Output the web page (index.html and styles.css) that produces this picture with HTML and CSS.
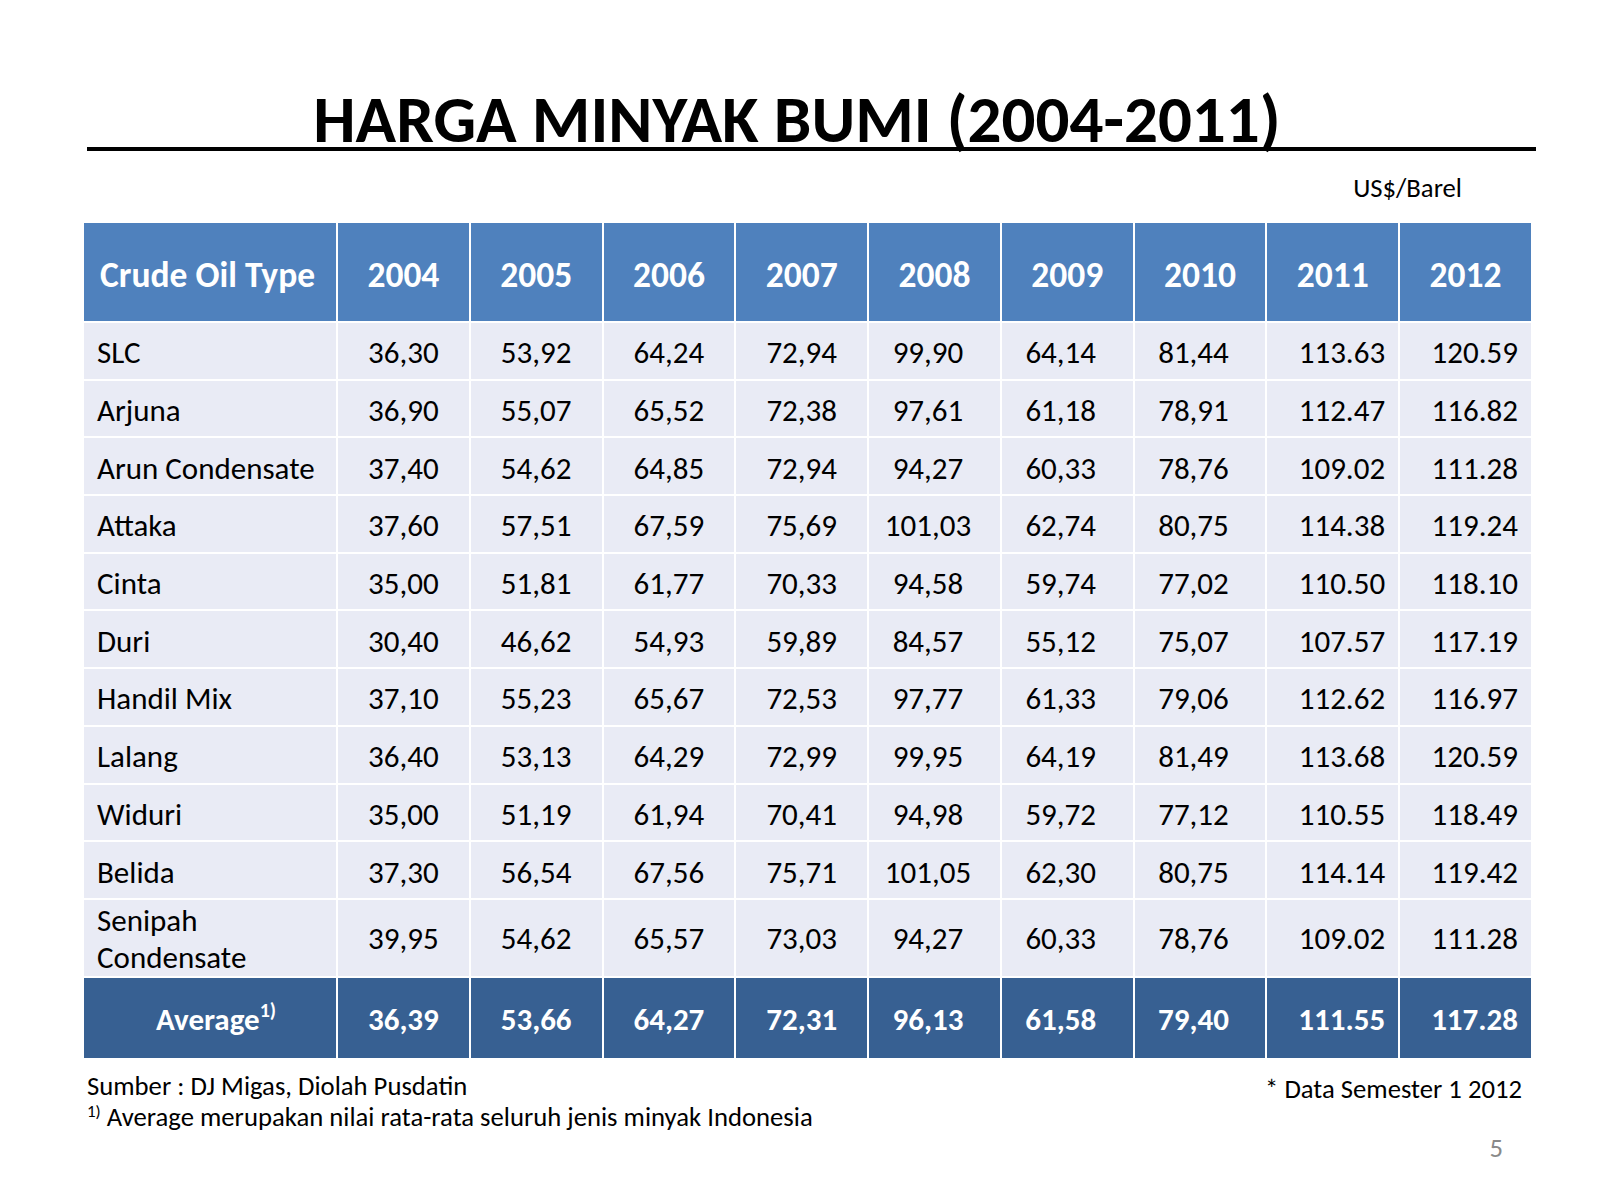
FILE: index.html
```html
<!DOCTYPE html>
<html lang="id">
<head>
<meta charset="utf-8">
<title>Harga Minyak Bumi (2004-2011)</title>
<link rel="stylesheet" href="styles.css">
</head>
<body>
<div class="slide">
  <div class="title-wrap"><h1 class="title">HARGA MINYAK BUMI (2004-2011)</h1></div>
  <div class="unit">US$/Barel</div>
  <table class="prices">
    <colgroup>
      <col class="c-name"><col><col><col><col><col><col><col><col><col>
    </colgroup>
    <thead>
      <tr>
        <th class="name">Crude Oil Type</th>
        <th>2004</th><th>2005</th><th>2006</th><th>2007</th><th>2008</th><th>2009</th><th>2010</th><th>2011</th><th>2012</th>
      </tr>
    </thead>
    <tbody>
      <tr><td class="name">SLC</td><td>36,30</td><td>53,92</td><td>64,24</td><td>72,94</td><td class="off">99,90</td><td class="off">64,14</td><td class="off">81,44</td><td class="r">113.63</td><td class="r">120.59</td></tr>
      <tr><td class="name">Arjuna</td><td>36,90</td><td>55,07</td><td>65,52</td><td>72,38</td><td class="off">97,61</td><td class="off">61,18</td><td class="off">78,91</td><td class="r">112.47</td><td class="r">116.82</td></tr>
      <tr><td class="name">Arun Condensate</td><td>37,40</td><td>54,62</td><td>64,85</td><td>72,94</td><td class="off">94,27</td><td class="off">60,33</td><td class="off">78,76</td><td class="r">109.02</td><td class="r">111.28</td></tr>
      <tr><td class="name">Attaka</td><td>37,60</td><td>57,51</td><td>67,59</td><td>75,69</td><td class="off">101,03</td><td class="off">62,74</td><td class="off">80,75</td><td class="r">114.38</td><td class="r">119.24</td></tr>
      <tr><td class="name">Cinta</td><td>35,00</td><td>51,81</td><td>61,77</td><td>70,33</td><td class="off">94,58</td><td class="off">59,74</td><td class="off">77,02</td><td class="r">110.50</td><td class="r">118.10</td></tr>
      <tr><td class="name">Duri</td><td>30,40</td><td>46,62</td><td>54,93</td><td>59,89</td><td class="off">84,57</td><td class="off">55,12</td><td class="off">75,07</td><td class="r">107.57</td><td class="r">117.19</td></tr>
      <tr><td class="name">Handil Mix</td><td>37,10</td><td>55,23</td><td>65,67</td><td>72,53</td><td class="off">97,77</td><td class="off">61,33</td><td class="off">79,06</td><td class="r">112.62</td><td class="r">116.97</td></tr>
      <tr><td class="name">Lalang</td><td>36,40</td><td>53,13</td><td>64,29</td><td>72,99</td><td class="off">99,95</td><td class="off">64,19</td><td class="off">81,49</td><td class="r">113.68</td><td class="r">120.59</td></tr>
      <tr><td class="name">Widuri</td><td>35,00</td><td>51,19</td><td>61,94</td><td>70,41</td><td class="off">94,98</td><td class="off">59,72</td><td class="off">77,12</td><td class="r">110.55</td><td class="r">118.49</td></tr>
      <tr><td class="name">Belida</td><td>37,30</td><td>56,54</td><td>67,56</td><td>75,71</td><td class="off">101,05</td><td class="off">62,30</td><td class="off">80,75</td><td class="r">114.14</td><td class="r">119.42</td></tr>
      <tr class="tall"><td class="name">Senipah Condensate</td><td>39,95</td><td>54,62</td><td>65,57</td><td>73,03</td><td class="off">94,27</td><td class="off">60,33</td><td class="off">78,76</td><td class="r">109.02</td><td class="r">111.28</td></tr>
    </tbody>
    <tfoot>
      <tr><td class="avg-label">Average<sup>1)</sup></td><td>36,39</td><td>53,66</td><td>64,27</td><td>72,31</td><td class="off">96,13</td><td class="off">61,58</td><td class="off">79,40</td><td class="r">111.55</td><td class="r">117.28</td></tr>
    </tfoot>
  </table>
  <div class="footer">
    <div class="notes">
      <div>Sumber : DJ Migas, Diolah Pusdatin</div>
      <div><sup>1)</sup> Average merupakan nilai rata-rata seluruh jenis minyak Indonesia</div>
    </div>
    <div class="semester">* Data Semester 1 2012</div>
  </div>
  <div class="page-num">5</div>
</div>
</body>
</html>
```

FILE: styles.css
```css
html, body {
  margin: 0;
  padding: 0;
  background: #ffffff;
}

.slide {
  width: 1600px;
  height: 1200px;
  display: flex;
  flex-direction: column;
  font-family: Carlito, Calibri, Lato, "Open Sans", sans-serif;
  color: #000000;
  overflow: hidden;
}

.title-wrap {
  margin: 91px 0 0 87px;
  width: 1449px;
  border-bottom: 4px solid #000000;
  padding-right: 29px;
  box-sizing: border-box;
}

.title {
  margin: 0;
  font-size: 67px;
  line-height: 56px;
  font-weight: bold;
  text-align: center;
  white-space: nowrap;
}

.unit {
  margin-top: 21px;
  padding-right: 138px;
  text-align: right;
  font-size: 26.7px;
  line-height: 32px;
}

.prices {
  margin: 17px 0 0 82px;
  width: 1451px;
  table-layout: fixed;
  border-collapse: separate;
  border-spacing: 2px;
}

.c-name {
  width: 252px;
}

.prices thead tr {
  height: 98px;
}

.prices tbody tr {
  height: 55.7px;
}

.prices tbody tr.tall {
  height: 74px;
}

.prices tfoot tr {
  height: 80.5px;
}

.prices th {
  background: #4F81BD;
  color: #ffffff;
  font-size: 35.5px;
  font-weight: bold;
  padding: 5px 0 0 0;
  text-align: center;
  vertical-align: middle;
}

.prices th.name {
  text-align: left;
  padding-left: 16px;
}

.prices td {
  background: #E9EBF5;
  font-size: 31px;
  line-height: 37px;
  padding: 4px 0 0 0;
  text-align: center;
  vertical-align: middle;
}

.prices td.name {
  text-align: left;
  padding-left: 13px;
}

.prices tr.tall td {
  padding-top: 2px;
}

.prices td.off {
  padding-right: 13px;
}

.prices td.r {
  text-align: right;
  padding-right: 13px;
}

.prices tfoot td {
  background: #376092;
  color: #ffffff;
  font-weight: bold;
  padding-top: 2px;
}

.prices td.avg-label {
  text-align: center;
  padding-left: 12px;
}

.avg-label sup {
  font-size: 20px;
  line-height: 0;
  vertical-align: 13px;
}

.footer {
  margin: 11px 0 0 87px;
  width: 1435px;
  display: flex;
  justify-content: space-between;
  align-items: flex-start;
  font-size: 26.7px;
  line-height: 31px;
}

.footer sup {
  font-size: 17px;
  line-height: 0;
  vertical-align: 9px;
}

.semester {
  padding-top: 3px;
}

.page-num {
  padding-right: 97px;
  text-align: right;
  font-size: 26.7px;
  line-height: 31px;
  color: #898989;
}
```
